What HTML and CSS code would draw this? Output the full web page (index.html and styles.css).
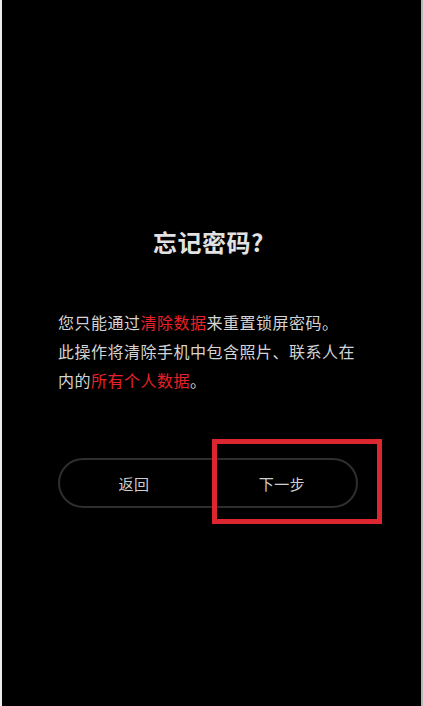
FILE: index.html
```html
<!DOCTYPE html>
<html lang="zh-CN">
<head>
<meta charset="utf-8">
<title>忘记密码?</title>
<link rel="stylesheet" href="styles.css">
</head>
<body>
<div class="screen">
  <h1 class="title">忘记密码?</h1>
  <p class="desc">您只能通过<span class="hl">清除数据</span>来重置锁屏密码。<br>此操作将清除手机中包含照片、联系人在<br>内的<span class="hl">所有个人数据</span>。</p>
  <div class="actions">
    <div class="pill">
      <div class="btn">返回</div>
      <div class="btn">下一步</div>
      <div class="mark"></div>
    </div>
  </div>
</div>
</body>
</html>
```

FILE: styles.css
```css
html, body {
  margin: 0;
  padding: 0;
  background: #000;
}
.screen {
  box-sizing: border-box;
  width: 423px;
  height: 706px;
  background: #000;
  border-left: 2px solid #ececec;
  border-right: 2px solid #b8b8b8;
  padding-top: 226px;
  font-family: "Noto Sans CJK SC", "Noto Sans", sans-serif;
  color: #d8d8d8;
}
.title {
  margin: 0;
  font-size: 24px;
  line-height: 32px;
  font-weight: 700;
  text-align: center;
  color: #e2e2e2;
  padding-right: 6px;
  letter-spacing: 0.5px;
}
.desc {
  margin: 50px 0 0 56px;
  font-size: 16px;
  line-height: 29px;
  letter-spacing: 0.5px;
  color: #d4d4d4;
}
.hl {
  color: #e8222a;
}
.actions {
  margin-top: 63px;
  padding-left: 56px;
}
.pill {
  position: relative;
  box-sizing: border-box;
  width: 300px;
  height: 50px;
  border: 2px solid #2e2e2e;
  border-radius: 25px;
  display: flex;
}
.btn {
  flex: 1;
  display: flex;
  align-items: center;
  justify-content: center;
  font-size: 15px;
  color: #cfcfcf;
  letter-spacing: 0.5px;
}
.mark {
  position: absolute;
  left: 152px;
  top: -21px;
  width: 170px;
  height: 85px;
  box-sizing: border-box;
  border: 5px solid #dc2630;
}
```
